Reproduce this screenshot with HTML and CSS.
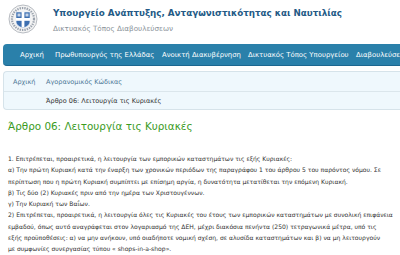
FILE: index.html
```html
<!DOCTYPE html>
<html lang="el">
<head>
  <meta charset="UTF-8" />
  <title>Άρθρο 06: Λειτουργία τις Κυριακές</title>
  <link rel="stylesheet" href="styles.css">
</head>
<body>
  <header class="site-head">
    <svg class="logo" width="30" height="30" viewBox="0 0 30 30">
      <circle cx="15" cy="15" r="14" fill="#f4f4f4" stroke="#b8bcc2" stroke-width="1"/>
      <circle cx="15" cy="15" r="11" fill="none" stroke="#9aa2ad" stroke-width="2.2" stroke-dasharray="1.4 1"/>
      <path d="M8 8 H22 V17 C22 21 18.5 23 15 24 C11.5 23 8 21 8 17 Z" fill="#3d6fb0" stroke="#e8eef7" stroke-width="0.6"/>
      <rect x="13.6" y="8" width="2.8" height="15.5" fill="#fff"/>
      <rect x="8" y="14" width="14" height="2.8" fill="#fff"/>
      <rect x="9.5" y="9.5" width="3" height="3" fill="#fff" opacity="0.7"/>
      <rect x="17.5" y="9.5" width="3" height="3" fill="#fff" opacity="0.7"/>
    </svg>
    <div class="titles">
      <h1>Υπουργείο Ανάπτυξης, Ανταγωνιστικότητας και Ναυτιλίας</h1>
      <p class="subtitle">Δικτυακός Τόπος Διαβουλεύσεων</p>
    </div>
  </header>

  <nav class="main-nav">
    <a href="#" class="nav-home">Αρχική</a>
    <a href="#" class="nav-pm">Πρωθυπουργός της Ελλάδας</a>
    <a href="#" class="nav-open">Ανοικτή Διακυβέρνηση</a>
    <a href="#" class="nav-site">Δικτυακός Τόπος Υπουργείου</a>
    <a href="#">Διαβουλεύσεις</a>
  </nav>

  <div class="crumbs">
    <div class="crumb-row">
      <a href="#" class="crumb-home">Αρχική</a>
      <a href="#">Αγορανομικός Κώδικας</a>
    </div>
    <div class="crumb-row">
      <span class="crumb-home"></span>
      <span class="current">Άρθρο 06: Λειτουργία τις Κυριακές</span>
    </div>
  </div>

  <h2 class="article-title">Άρθρο 06: Λειτουργία τις Κυριακές</h2>

  <div class="article-body">
    1. Επιτρέπεται, προαιρετικά, η λειτουργία των εμπορικών καταστημάτων τις εξής Κυριακές:<br>
    α) Την πρώτη Κυριακή κατά την έναρξη των χρονικών περιόδων της παραγράφου 1 του άρθρου 5 του παρόντος νόμου. Σε<br>
    περίπτωση που η πρώτη Κυριακή συμπίπτει με επίσημη αργία, η δυνατότητα μετατίθεται την επόμενη Κυριακή.<br>
    β) Τις δύο (2) Κυριακές πριν από την ημέρα των Χριστουγέννων.<br>
    γ) Την Κυριακή των Βαΐων.<br>
    2) Επιτρέπεται, προαιρετικά, η λειτουργία όλες τις Κυριακές του έτους των εμπορικών καταστημάτων με συνολική επιφάνεια<br>
    εμβαδού, όπως αυτό αναγράφεται στον λογαριασμό της ΔΕΗ, μέχρι διακόσια πενήντα (250) τετραγωνικά μέτρα, υπό τις<br>
    εξής προϋποθέσεις: α) να μην ανήκουν, υπό οιαδήποτε νομική σχέση, σε αλυσίδα καταστημάτων και β) να μη λειτουργούν<br>
    με συμφωνίες συνεργασίας τύπου « shops-in-a-shop».
  </div>
</body>
</html>
```

FILE: styles.css
```css
body {
  margin: 0;
  background: #fff;
  font-family: "DejaVu Sans", Verdana, sans-serif;
  overflow: hidden;
  width: 400px;
}
.site-head {
  display: flex;
  align-items: flex-start;
  padding: 5px 0 0 8px;
  height: 39px;
  box-sizing: border-box;
}
.logo {
  flex: none;
  margin-top: -1px;
}
.titles {
  margin-left: 15px;
}
h1 {
  margin: 3px 0 0 0;
  font-size: 8.75px;
  font-weight: bold;
  color: #245a86;
  white-space: nowrap;
}
.subtitle {
  margin: 6px 0 0 0;
  font-size: 7.2px;
  color: #8a9299;
  white-space: nowrap;
}
.main-nav {
  margin: 5px 0 0 3px;
  height: 22px;
  background: #2a80aa;
  border-bottom: 1px solid #1d6790;
  border-radius: 4px 0 0 4px;
  display: flex;
  align-items: center;
  padding-left: 17px;
  white-space: nowrap;
  overflow: hidden;
  box-sizing: border-box;
}
.main-nav a {
  flex: none;
  color: #fff;
  text-decoration: none;
  font-size: 6.9px;
}
.main-nav .nav-home { width: 35px; }
.main-nav .nav-pm { width: 107px; }
.main-nav .nav-open { width: 86px; }
.main-nav .nav-site { width: 108px; }
.crumbs {
  margin: 5px 0 0 3px;
  background: #eff8fd;
  border: 1px solid #d6e3ea;
  border-right: none;
  border-radius: 4px 0 0 4px;
  height: 39px;
  box-sizing: border-box;
  padding-left: 9px;
}
.crumb-row {
  display: flex;
  height: 19px;
  align-items: center;
  font-size: 6.5px;
}
.crumb-row + .crumb-row {
  border-top: 1px solid #dbe6ec;
  margin-left: -9px;
  padding-left: 9px;
  height: 18px;
}
.crumb-home {
  width: 33px;
  color: #4d7796;
  text-decoration: none;
}
.crumb-row a {
  color: #4d7796;
  text-decoration: none;
}
.current {
  color: #333;
}
.article-title {
  margin: 10px 0 0 8px;
  font-size: 10.4px;
  font-weight: normal;
  color: #3b9b1e;
}
.article-body {
  margin: 21px 0 0 8px;
  font-size: 6.05px;
  line-height: 11.3px;
  color: #333;
  white-space: nowrap;
}
```
